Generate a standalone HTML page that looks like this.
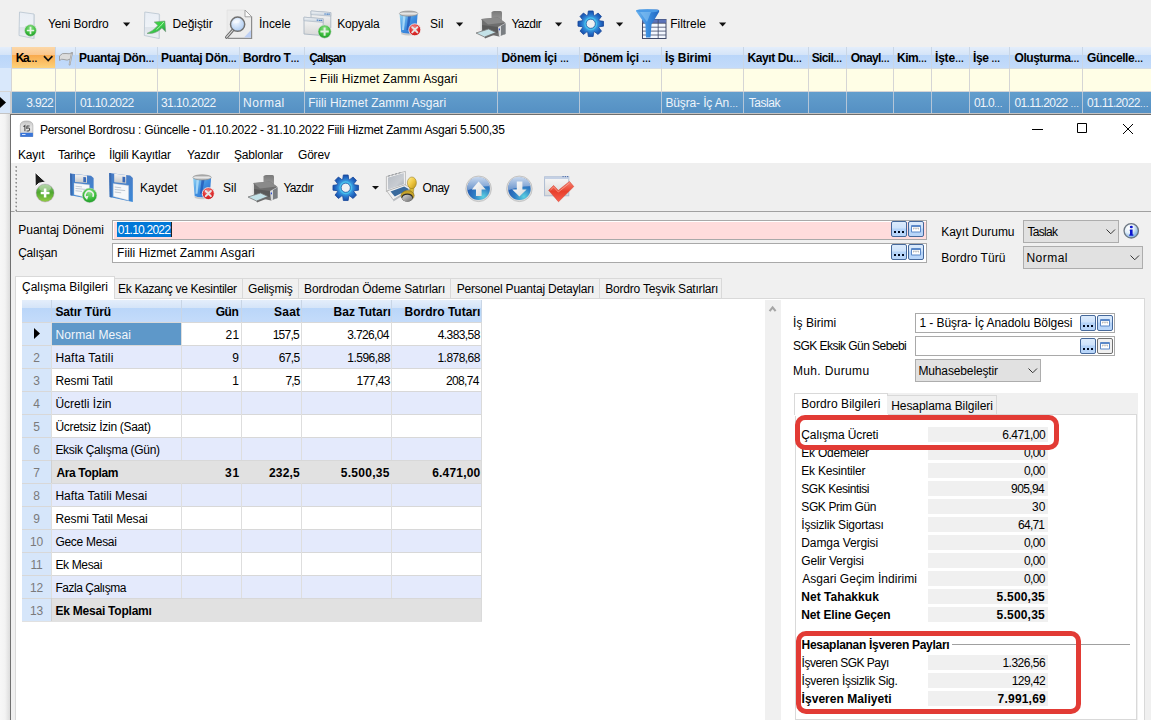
<!DOCTYPE html><html><head><meta charset="utf-8"><style>
*{margin:0;padding:0;box-sizing:border-box}
html,body{width:1151px;height:720px;overflow:hidden;background:#f0f0f0}
body{position:relative;font-family:"Liberation Sans",sans-serif;font-size:12px;color:#000;letter-spacing:-0.2px}
div{position:absolute}
.t{line-height:14px;white-space:nowrap;height:14px}
.el{font-size:9px;letter-spacing:-0.5px}
svg{position:absolute;overflow:visible}
</style></head><body><div style="left:0px;top:0px;width:1151px;height:47px;background:#f0f0f0"></div>
<div class="t" style="left:48.00px;top:17px;;letter-spacing:-0.150px">Yeni Bordro</div>
<div class="t" style="left:172.50px;top:17px;;letter-spacing:-0.071px">Değiştir</div>
<div class="t" style="left:259.00px;top:17px;;letter-spacing:-0.060px">İncele</div>
<div class="t" style="left:337.20px;top:17px;;letter-spacing:-0.150px">Kopyala</div>
<div class="t" style="left:430.00px;top:17px;;letter-spacing:0.100px">Sil</div>
<div class="t" style="left:511.40px;top:17px;;letter-spacing:-0.680px">Yazdır</div>
<div class="t" style="left:670.20px;top:17px;;letter-spacing:-0.029px">Filtrele</div>
<div style="left:0px;top:47px;width:1151px;height:21px;background:linear-gradient(#e4eefb 0px,#d4e4f8 8px,#bad6f9 8px,#c3dbfa 21px)"></div>
<div style="left:12px;top:47px;width:44px;height:21px;background:linear-gradient(#fcd8a8 0px,#fbc68d 8px,#f9a94c 8px,#fdd27a 21px)"></div>
<div style="left:11px;top:47px;width:1px;height:21px;background:#c9d6e6"></div>
<div style="left:55px;top:47px;width:1px;height:21px;background:#c9d6e6"></div>
<div style="left:75px;top:47px;width:1px;height:21px;background:#c9d6e6"></div>
<div style="left:157px;top:47px;width:1px;height:21px;background:#c9d6e6"></div>
<div style="left:239px;top:47px;width:1px;height:21px;background:#c9d6e6"></div>
<div style="left:304px;top:47px;width:1px;height:21px;background:#c9d6e6"></div>
<div style="left:497px;top:47px;width:1px;height:21px;background:#c9d6e6"></div>
<div style="left:579px;top:47px;width:1px;height:21px;background:#c9d6e6"></div>
<div style="left:661px;top:47px;width:1px;height:21px;background:#c9d6e6"></div>
<div style="left:743px;top:47px;width:1px;height:21px;background:#c9d6e6"></div>
<div style="left:808px;top:47px;width:1px;height:21px;background:#c9d6e6"></div>
<div style="left:846px;top:47px;width:1px;height:21px;background:#c9d6e6"></div>
<div style="left:893px;top:47px;width:1px;height:21px;background:#c9d6e6"></div>
<div style="left:931px;top:47px;width:1px;height:21px;background:#c9d6e6"></div>
<div style="left:969px;top:47px;width:1px;height:21px;background:#c9d6e6"></div>
<div style="left:1009px;top:47px;width:1px;height:21px;background:#c9d6e6"></div>
<div style="left:1082px;top:47px;width:1px;height:21px;background:#c9d6e6"></div>
<div style="left:0px;top:68px;width:1151px;height:24px;background:#fffee6"></div>
<div style="left:0px;top:68px;width:1151px;height:1px;background:#d4dce4"></div>
<div style="left:0px;top:68px;width:11px;height:24px;background:#d9e8fb"></div>
<div style="left:11px;top:68px;width:1px;height:24px;background:#d5d5d5"></div>
<div style="left:55px;top:68px;width:1px;height:24px;background:#d5d5d5"></div>
<div style="left:75px;top:68px;width:1px;height:24px;background:#d5d5d5"></div>
<div style="left:157px;top:68px;width:1px;height:24px;background:#d5d5d5"></div>
<div style="left:239px;top:68px;width:1px;height:24px;background:#d5d5d5"></div>
<div style="left:304px;top:68px;width:1px;height:24px;background:#d5d5d5"></div>
<div style="left:497px;top:68px;width:1px;height:24px;background:#d5d5d5"></div>
<div style="left:579px;top:68px;width:1px;height:24px;background:#d5d5d5"></div>
<div style="left:661px;top:68px;width:1px;height:24px;background:#d5d5d5"></div>
<div style="left:743px;top:68px;width:1px;height:24px;background:#d5d5d5"></div>
<div style="left:808px;top:68px;width:1px;height:24px;background:#d5d5d5"></div>
<div style="left:846px;top:68px;width:1px;height:24px;background:#d5d5d5"></div>
<div style="left:893px;top:68px;width:1px;height:24px;background:#d5d5d5"></div>
<div style="left:931px;top:68px;width:1px;height:24px;background:#d5d5d5"></div>
<div style="left:969px;top:68px;width:1px;height:24px;background:#d5d5d5"></div>
<div style="left:1009px;top:68px;width:1px;height:24px;background:#d5d5d5"></div>
<div style="left:1082px;top:68px;width:1px;height:24px;background:#d5d5d5"></div>
<div style="left:0px;top:91px;width:1151px;height:1px;background:#d5d5d5"></div>
<div style="left:0px;top:92px;width:1151px;height:21px;background:linear-gradient(#629ecd,#5590c3)"></div>
<div style="left:0px;top:92px;width:11px;height:21px;background:#d6e6fa"></div>
<div style="left:11px;top:92px;width:1px;height:21px;background:#b4c6d8"></div>
<div style="left:55px;top:92px;width:1px;height:21px;background:#b4c6d8"></div>
<div style="left:75px;top:92px;width:1px;height:21px;background:#b4c6d8"></div>
<div style="left:157px;top:92px;width:1px;height:21px;background:#b4c6d8"></div>
<div style="left:239px;top:92px;width:1px;height:21px;background:#b4c6d8"></div>
<div style="left:304px;top:92px;width:1px;height:21px;background:#b4c6d8"></div>
<div style="left:497px;top:92px;width:1px;height:21px;background:#b4c6d8"></div>
<div style="left:579px;top:92px;width:1px;height:21px;background:#b4c6d8"></div>
<div style="left:661px;top:92px;width:1px;height:21px;background:#b4c6d8"></div>
<div style="left:743px;top:92px;width:1px;height:21px;background:#b4c6d8"></div>
<div style="left:808px;top:92px;width:1px;height:21px;background:#b4c6d8"></div>
<div style="left:846px;top:92px;width:1px;height:21px;background:#b4c6d8"></div>
<div style="left:893px;top:92px;width:1px;height:21px;background:#b4c6d8"></div>
<div style="left:931px;top:92px;width:1px;height:21px;background:#b4c6d8"></div>
<div style="left:969px;top:92px;width:1px;height:21px;background:#b4c6d8"></div>
<div style="left:1009px;top:92px;width:1px;height:21px;background:#b4c6d8"></div>
<div style="left:1082px;top:92px;width:1px;height:21px;background:#b4c6d8"></div>
<div style="left:0px;top:113px;width:1151px;height:1px;background:#c4c4c4"></div>
<div style="left:10px;top:92px;width:2px;height:21px;background:#c8ccd0"></div>
<svg style="left:0px;top:97px" width="8" height="11"><path d="M0 0L6 5.5L0 11Z" fill="#000"/></svg>
<div class="t" style="left:15.70px;top:51px;font-weight:bold;letter-spacing:-1.300px">Ka<span class=el>…</span></div>
<div class="t" style="left:79.00px;top:51px;font-weight:bold;letter-spacing:-0.318px">Puantaj Dön<span class=el>…</span></div>
<div class="t" style="left:161.00px;top:51px;font-weight:bold;letter-spacing:-0.300px">Puantaj Dön<span class=el>…</span></div>
<div class="t" style="left:243.00px;top:51px;font-weight:bold;letter-spacing:-0.388px">Bordro T<span class=el>…</span></div>
<div class="t" style="left:309.20px;top:51px;font-weight:bold;letter-spacing:-0.983px">Çalışan</div>
<div class="t" style="left:501.40px;top:51px;font-weight:bold;letter-spacing:-0.210px">Dönem İçi <span class=el>…</span></div>
<div class="t" style="left:583.40px;top:51px;font-weight:bold;letter-spacing:-0.210px">Dönem İçi <span class=el>…</span></div>
<div class="t" style="left:664.90px;top:51px;font-weight:bold;letter-spacing:-0.125px">İş Birimi</div>
<div class="t" style="left:747.40px;top:51px;font-weight:bold;letter-spacing:-0.388px">Kayıt Du<span class=el>…</span></div>
<div class="t" style="left:811.70px;top:51px;font-weight:bold;letter-spacing:-0.620px">Sicil<span class=el>…</span></div>
<div class="t" style="left:850.70px;top:51px;font-weight:bold;letter-spacing:-0.680px">Onayl<span class=el>…</span></div>
<div class="t" style="left:897.00px;top:51px;font-weight:bold;letter-spacing:-0.533px">Kim<span class=el>…</span></div>
<div class="t" style="left:935.00px;top:51px;font-weight:bold;letter-spacing:-0.200px">İşte<span class=el>…</span></div>
<div class="t" style="left:973.10px;top:51px;font-weight:bold;letter-spacing:-0.475px">İşe <span class=el>…</span></div>
<div class="t" style="left:1014.50px;top:51px;font-weight:bold;letter-spacing:-0.456px">Oluşturma<span class=el>…</span></div>
<div class="t" style="left:1087.10px;top:51px;font-weight:bold;letter-spacing:-0.450px">Güncelle<span class=el>…</span></div>
<svg style="left:43px;top:55px" width="11" height="8"><path d="M1 1.2L5.2 5.6L9.4 1.2" fill="none" stroke="#111" stroke-width="1.7"/></svg>
<svg style="left:57px;top:50px" width="18" height="16"><path d="M2.5,6 Q5,2.5 9,3.5 Q12,4.5 15.5,2.5 L13.5,9 Q10,11 7,9.5 Q4.5,8.5 2.5,10.5 Z" fill="#dcdcdc" stroke="#9a9a9a" stroke-width="0.9"/><path d="M14.8,3.5 L12.6,14.5" stroke="#9a9a9a" stroke-width="1.8" stroke-linecap="round"/><path d="M14.8,3.5 L12.6,14.5" stroke="#e8e8e8" stroke-width="0.6"/></svg>
<div class="t" style="left:309.60px;top:72px;;letter-spacing:0.058px">= Fiili Hizmet Zammı Asgari</div>
<div class="t" style="left:26.20px;top:96px;color:#eef4fa;letter-spacing:-0.625px">3.922</div>
<div class="t" style="left:80.00px;top:96px;color:#eef4fa;letter-spacing:-0.667px">01.10.2022</div>
<div class="t" style="left:161.00px;top:96px;color:#eef4fa;letter-spacing:-0.556px">31.10.2022</div>
<div class="t" style="left:243.00px;top:96px;color:#eef4fa;letter-spacing:0.520px">Normal</div>
<div class="t" style="left:308.20px;top:96px;color:#eef4fa;letter-spacing:0.079px">Fiili Hizmet Zammı Asgari</div>
<div class="t" style="left:665.40px;top:96px;color:#eef4fa;letter-spacing:-0.133px">Büşra- İç An<span class=el>…</span></div>
<div class="t" style="left:748.70px;top:96px;color:#eef4fa;letter-spacing:-0.460px">Taslak</div>
<div class="t" style="left:974.10px;top:96px;color:#eef4fa;letter-spacing:-0.925px">01.0<span class=el>…</span></div>
<div class="t" style="left:1014.50px;top:96px;color:#eef4fa;letter-spacing:-0.618px">01.11.2022 <span class=el>…</span></div>
<div class="t" style="left:1087.10px;top:96px;color:#eef4fa;letter-spacing:-0.660px">01.11.2022<span class=el>…</span></div>
<div style="left:0px;top:114px;width:10px;height:606px;background:linear-gradient(90deg,#f7f7f7 0px,#f3f3f3 5px,#dcdcdc 10px)"></div>
<div style="left:10px;top:114px;width:1141px;height:606px;background:#f0f0f0;border-left:1px solid #707070"></div>
<div style="left:11px;top:114px;width:1140px;height:49px;background:#fff;border-top:1px solid #6e6e6e"></div>
<div class="t" style="left:39.90px;top:123px;;letter-spacing:-0.256px">Personel Bordrosu : Güncelle - 01.10.2022 - 31.10.2022 Fiili Hizmet Zammı Asgari 5.500,35</div>
<svg style="left:1031px;top:122px" width="110" height="14"><path d="M1 7.5H12" stroke="#000" stroke-width="1"/><path d="M46.5 1.5H55.5V10.5H46.5Z" fill="none" stroke="#000" stroke-width="1"/><path d="M92 2L102 12M102 2L92 12" stroke="#000" stroke-width="1"/></svg>
<div class="t" style="left:18px;top:148px;">Kayıt</div>
<div class="t" style="left:58px;top:148px;">Tarihçe</div>
<div class="t" style="left:109px;top:148px;">İlgili Kayıtlar</div>
<div class="t" style="left:187px;top:148px;">Yazdır</div>
<div class="t" style="left:234px;top:148px;">Şablonlar</div>
<div class="t" style="left:298px;top:148px;">Görev</div>
<div style="left:11px;top:163px;width:1140px;height:48px;background:#efefef"></div>
<div style="left:11px;top:211px;width:1140px;height:1px;background:#a0a0a0"></div>
<svg style="left:14px;top:165px" width="6" height="48"><rect x="0.6" y="2.00" width="1.5" height="1.5" fill="#ffffff"/><rect x="1.4" y="1.20" width="1.6" height="1.6" fill="#8c8c8c"/><rect x="0.6" y="5.95" width="1.5" height="1.5" fill="#ffffff"/><rect x="1.4" y="5.15" width="1.6" height="1.6" fill="#8c8c8c"/><rect x="0.6" y="9.90" width="1.5" height="1.5" fill="#ffffff"/><rect x="1.4" y="9.10" width="1.6" height="1.6" fill="#8c8c8c"/><rect x="0.6" y="13.85" width="1.5" height="1.5" fill="#ffffff"/><rect x="1.4" y="13.05" width="1.6" height="1.6" fill="#8c8c8c"/><rect x="0.6" y="17.80" width="1.5" height="1.5" fill="#ffffff"/><rect x="1.4" y="17.00" width="1.6" height="1.6" fill="#8c8c8c"/><rect x="0.6" y="21.75" width="1.5" height="1.5" fill="#ffffff"/><rect x="1.4" y="20.95" width="1.6" height="1.6" fill="#8c8c8c"/><rect x="0.6" y="25.70" width="1.5" height="1.5" fill="#ffffff"/><rect x="1.4" y="24.90" width="1.6" height="1.6" fill="#8c8c8c"/><rect x="0.6" y="29.65" width="1.5" height="1.5" fill="#ffffff"/><rect x="1.4" y="28.85" width="1.6" height="1.6" fill="#8c8c8c"/><rect x="0.6" y="33.60" width="1.5" height="1.5" fill="#ffffff"/><rect x="1.4" y="32.80" width="1.6" height="1.6" fill="#8c8c8c"/><rect x="0.6" y="37.55" width="1.5" height="1.5" fill="#ffffff"/><rect x="1.4" y="36.75" width="1.6" height="1.6" fill="#8c8c8c"/><rect x="0.6" y="41.50" width="1.5" height="1.5" fill="#ffffff"/><rect x="1.4" y="40.70" width="1.6" height="1.6" fill="#8c8c8c"/><rect x="0.6" y="45.45" width="1.5" height="1.5" fill="#ffffff"/><rect x="1.4" y="44.65" width="1.6" height="1.6" fill="#8c8c8c"/></svg>
<div class="t" style="left:140.00px;top:181px;;letter-spacing:0.000px">Kaydet</div>
<div class="t" style="left:223.00px;top:181px;;letter-spacing:0.000px">Sil</div>
<div class="t" style="left:283.40px;top:181px;;letter-spacing:-0.680px">Yazdır</div>
<svg style="left:372px;top:186px" width="8" height="5"><path d="M0 0H7L3.5 3.5Z" fill="#111"/></svg>
<div class="t" style="left:422.60px;top:181px;;letter-spacing:-0.567px">Onay</div>
<div class="t" style="left:18.20px;top:223px;;letter-spacing:0.023px">Puantaj Dönemi</div>
<div style="left:112px;top:220px;width:815px;height:20px;background:#ffdcdc;border:1px solid #a9a9a9;box-shadow:inset 1px 1px 0 #fff"></div>
<div style="left:117px;top:222px;width:54px;height:15px;background:#0078d7"></div>
<div style="left:171px;top:222px;width:1px;height:15px;background:#222"></div>
<div class="t" style="left:117.80px;top:223px;color:#fff;letter-spacing:-0.778px">01.10.2022</div>
<div class="t" style="left:18.20px;top:246px;;letter-spacing:-0.250px">Çalışan</div>
<div style="left:112px;top:243px;width:815px;height:20px;background:#fff;border:1px solid #a9a9a9"></div>
<div class="t" style="left:117.00px;top:246px;;letter-spacing:0.067px">Fiili Hizmet Zammı Asgari</div>
<div style="left:891px;top:221px;width:16px;height:16px;background:linear-gradient(#dcebfc 0px,#cfe3fb 6px,#b4d3f8 7px,#bcd8fa 16px);border:1px solid #45689a;border-radius:2px"></div>
<svg style="left:891px;top:221px" width="16" height="16"><rect x="3" y="10" width="2" height="2" fill="#000a20"/><rect x="7" y="10" width="2" height="2" fill="#000a20"/><rect x="11" y="10" width="2" height="2" fill="#000a20"/></svg>
<div style="left:908px;top:221px;width:16px;height:16px;background:linear-gradient(#dcebfc 0px,#cfe3fb 6px,#b4d3f8 7px,#bcd8fa 16px);border:1px solid #45689a;border-radius:2px"></div>
<svg style="left:908px;top:221px" width="16" height="16"><rect x="3" y="4" width="10" height="7.5" rx="1" fill="#5a88c8"/><rect x="4" y="6" width="8" height="4.5" fill="#fff"/><path d="M5,7.2 H11 M5.5,7.2 V8.5 M8,7.2 V8.5 M10.5,7.2 V8.5" stroke="#a0a0a0" stroke-width="0.6"/></svg>
<div style="left:891px;top:244px;width:16px;height:16px;background:linear-gradient(#dcebfc 0px,#cfe3fb 6px,#b4d3f8 7px,#bcd8fa 16px);border:1px solid #45689a;border-radius:2px"></div>
<svg style="left:891px;top:244px" width="16" height="16"><rect x="3" y="10" width="2" height="2" fill="#000a20"/><rect x="7" y="10" width="2" height="2" fill="#000a20"/><rect x="11" y="10" width="2" height="2" fill="#000a20"/></svg>
<div style="left:908px;top:244px;width:16px;height:16px;background:linear-gradient(#dcebfc 0px,#cfe3fb 6px,#b4d3f8 7px,#bcd8fa 16px);border:1px solid #45689a;border-radius:2px"></div>
<svg style="left:908px;top:244px" width="16" height="16"><rect x="3" y="4" width="10" height="7.5" rx="1" fill="#5a88c8"/><rect x="4" y="6" width="8" height="4.5" fill="#fff"/><path d="M5,7.2 H11 M5.5,7.2 V8.5 M8,7.2 V8.5 M10.5,7.2 V8.5" stroke="#a0a0a0" stroke-width="0.6"/></svg>
<div class="t" style="left:941.20px;top:225px;;letter-spacing:0.000px">Kayıt Durumu</div>
<div style="left:1023px;top:220px;width:96px;height:23px;background:#e1e1e1;border:1px solid #adadad"></div>
<div class="t" style="left:1027.40px;top:225px;;letter-spacing:-0.680px">Taslak</div>
<svg style="left:1105.5px;top:229.0px" width="10" height="6"><path d="M0.5 0.5L4.75 4.75L9 0.5" fill="none" stroke="#333" stroke-width="1"/></svg>
<svg style="left:1123px;top:222px" width="18" height="18"><defs><radialGradient id="ig" cx="35%" cy="30%" r="75%"><stop offset="0" stop-color="#ffffff"/><stop offset="0.45" stop-color="#e4f0fa"/><stop offset="1" stop-color="#6aa4dc"/></radialGradient></defs><circle cx="8.25" cy="8.8" r="7.2" fill="url(#ig)" stroke="#6c7682" stroke-width="1.3"/><path d="M7,7.4 H9.6 V12.6 H10.4 V13.8 H6.2 V12.6 H7 V8.6 H6.4 Z" fill="#0a14d0"/><ellipse cx="8.3" cy="5" rx="1.5" ry="1.2" fill="#0a14d0"/></svg>
<div class="t" style="left:941.20px;top:251px;;letter-spacing:0.040px">Bordro Türü</div>
<div style="left:1023px;top:246px;width:120px;height:23px;background:#e1e1e1;border:1px solid #adadad"></div>
<div class="t" style="left:1026.40px;top:251px;;letter-spacing:0.480px">Normal</div>
<svg style="left:1129.5px;top:255.0px" width="10" height="6"><path d="M0.5 0.5L4.75 4.75L9 0.5" fill="none" stroke="#333" stroke-width="1"/></svg>
<div style="left:15px;top:276px;width:100px;height:24px;background:#fff;border:1px solid #d9d9d9;border-bottom:none"></div>
<div class="t" style="left:22.00px;top:280px;;letter-spacing:0.000px">Çalışma Bilgileri</div>
<div style="left:115px;top:278px;width:128px;height:21px;background:#f0f0f0;border:1px solid #d9d9d9;border-left:none"></div>
<div class="t" style="left:118.00px;top:282px;;letter-spacing:-0.318px">Ek Kazanç ve Kesintiler</div>
<div style="left:243px;top:278px;width:56px;height:21px;background:#f0f0f0;border:1px solid #d9d9d9;border-left:none"></div>
<div class="t" style="left:248.00px;top:282px;;letter-spacing:-0.186px">Gelişmiş</div>
<div style="left:299px;top:278px;width:152px;height:21px;background:#f0f0f0;border:1px solid #d9d9d9;border-left:none"></div>
<div class="t" style="left:304.00px;top:282px;;letter-spacing:-0.117px">Bordrodan Ödeme Satırları</div>
<div style="left:451px;top:278px;width:149px;height:21px;background:#f0f0f0;border:1px solid #d9d9d9;border-left:none"></div>
<div class="t" style="left:456.70px;top:282px;;letter-spacing:-0.200px">Personel Puantaj Detayları</div>
<div style="left:600px;top:278px;width:122px;height:21px;background:#f0f0f0;border:1px solid #d9d9d9;border-left:none"></div>
<div class="t" style="left:605.30px;top:282px;;letter-spacing:-0.214px">Bordro Teşvik Satırları</div>
<div style="left:15px;top:298px;width:1130px;height:422px;background:#fff;border:1px solid #d9d9d9;border-bottom:none"></div>
<div style="left:16px;top:298px;width:98px;height:2px;background:#fff"></div>
<div style="left:22px;top:300px;width:460px;height:22px;background:linear-gradient(#e4eefb 0px,#d4e4f8 8px,#bad6f9 8px,#c3dbfa 21px)"></div>
<div style="left:51px;top:300px;width:1px;height:22px;background:#c9d6e6"></div>
<div style="left:181px;top:300px;width:1px;height:22px;background:#c9d6e6"></div>
<div style="left:241px;top:300px;width:1px;height:22px;background:#c9d6e6"></div>
<div style="left:301px;top:300px;width:1px;height:22px;background:#c9d6e6"></div>
<div style="left:391px;top:300px;width:1px;height:22px;background:#c9d6e6"></div>
<div style="left:22px;top:322px;width:460px;height:23px;background:#ffffff"></div>
<div style="left:22px;top:322px;width:30px;height:23px;background:#d6e6fa"></div>
<div style="left:22px;top:322px;width:460px;height:1px;background:#d8d8d8"></div>
<div style="left:51px;top:322px;width:1px;height:23px;background:#dedede"></div>
<div style="left:181px;top:322px;width:1px;height:23px;background:#dedede"></div>
<div style="left:241px;top:322px;width:1px;height:23px;background:#dedede"></div>
<div style="left:301px;top:322px;width:1px;height:23px;background:#dedede"></div>
<div style="left:391px;top:322px;width:1px;height:23px;background:#dedede"></div>
<div style="left:52px;top:323px;width:129px;height:22px;background:#5e98c9"></div>
<div class="t" style="left:55.40px;top:328px;color:#f2f6fb;letter-spacing:0.145px">Normal Mesai</div>
<svg style="left:34px;top:328px" width="7" height="11"><path d="M0 0L6 5.5L0 11Z" fill="#000"/></svg>
<div class="t" style="left:225.40px;top:328px;;letter-spacing:0.400px">21</div>
<div class="t" style="left:272.70px;top:328px;;letter-spacing:-0.750px">157,5</div>
<div class="t" style="left:347.30px;top:328px;;letter-spacing:-0.657px">3.726,04</div>
<div class="t" style="left:437.80px;top:328px;;letter-spacing:-0.600px">4.383,58</div>
<div style="left:22px;top:345px;width:460px;height:23px;background:#e4eafc"></div>
<div style="left:22px;top:345px;width:30px;height:23px;background:#d6e6fa"></div>
<div style="left:22px;top:345px;width:460px;height:1px;background:#d8d8d8"></div>
<div style="left:51px;top:345px;width:1px;height:23px;background:#dedede"></div>
<div style="left:181px;top:345px;width:1px;height:23px;background:#dedede"></div>
<div style="left:241px;top:345px;width:1px;height:23px;background:#dedede"></div>
<div style="left:301px;top:345px;width:1px;height:23px;background:#dedede"></div>
<div style="left:391px;top:345px;width:1px;height:23px;background:#dedede"></div>
<div class="t" style="left:22px;top:351px;width:29px;text-align:center;color:#7a7a7a">2</div>
<div class="t" style="left:55.40px;top:351px;;letter-spacing:0.191px">Hafta Tatili</div>
<div class="t" style="left:38.80000000000001px;top:351px;width:200px;text-align:right;">9</div>
<div class="t" style="left:278.80px;top:351px;;letter-spacing:-0.700px">67,5</div>
<div class="t" style="left:347.30px;top:351px;;letter-spacing:-0.514px">1.596,88</div>
<div class="t" style="left:437.50px;top:351px;;letter-spacing:-0.557px">1.878,68</div>
<div style="left:22px;top:368px;width:460px;height:23px;background:#ffffff"></div>
<div style="left:22px;top:368px;width:30px;height:23px;background:#d6e6fa"></div>
<div style="left:22px;top:368px;width:460px;height:1px;background:#d8d8d8"></div>
<div style="left:51px;top:368px;width:1px;height:23px;background:#dedede"></div>
<div style="left:181px;top:368px;width:1px;height:23px;background:#dedede"></div>
<div style="left:241px;top:368px;width:1px;height:23px;background:#dedede"></div>
<div style="left:301px;top:368px;width:1px;height:23px;background:#dedede"></div>
<div style="left:391px;top:368px;width:1px;height:23px;background:#dedede"></div>
<div class="t" style="left:22px;top:374px;width:29px;text-align:center;color:#7a7a7a">3</div>
<div class="t" style="left:55.40px;top:374px;;letter-spacing:-0.090px">Resmi Tatil</div>
<div class="t" style="left:38.80000000000001px;top:374px;width:200px;text-align:right;">1</div>
<div class="t" style="left:285.40px;top:374px;;letter-spacing:-0.850px">7,5</div>
<div class="t" style="left:356.60px;top:374px;;letter-spacing:-0.580px">177,43</div>
<div class="t" style="left:446.00px;top:374px;;letter-spacing:-0.680px">208,74</div>
<div style="left:22px;top:391px;width:460px;height:23px;background:#e4eafc"></div>
<div style="left:22px;top:391px;width:30px;height:23px;background:#d6e6fa"></div>
<div style="left:22px;top:391px;width:460px;height:1px;background:#d8d8d8"></div>
<div style="left:51px;top:391px;width:1px;height:23px;background:#dedede"></div>
<div style="left:181px;top:391px;width:1px;height:23px;background:#dedede"></div>
<div style="left:241px;top:391px;width:1px;height:23px;background:#dedede"></div>
<div style="left:301px;top:391px;width:1px;height:23px;background:#dedede"></div>
<div style="left:391px;top:391px;width:1px;height:23px;background:#dedede"></div>
<div class="t" style="left:22px;top:397px;width:29px;text-align:center;color:#7a7a7a">4</div>
<div class="t" style="left:55.40px;top:397px;;letter-spacing:0.009px">Ücretli İzin</div>
<div style="left:22px;top:414px;width:460px;height:23px;background:#ffffff"></div>
<div style="left:22px;top:414px;width:30px;height:23px;background:#d6e6fa"></div>
<div style="left:22px;top:414px;width:460px;height:1px;background:#d8d8d8"></div>
<div style="left:51px;top:414px;width:1px;height:23px;background:#dedede"></div>
<div style="left:181px;top:414px;width:1px;height:23px;background:#dedede"></div>
<div style="left:241px;top:414px;width:1px;height:23px;background:#dedede"></div>
<div style="left:301px;top:414px;width:1px;height:23px;background:#dedede"></div>
<div style="left:391px;top:414px;width:1px;height:23px;background:#dedede"></div>
<div class="t" style="left:22px;top:420px;width:29px;text-align:center;color:#7a7a7a">5</div>
<div class="t" style="left:55.40px;top:420px;;letter-spacing:-0.305px">Ücretsiz İzin (Saat)</div>
<div style="left:22px;top:437px;width:460px;height:23px;background:#e4eafc"></div>
<div style="left:22px;top:437px;width:30px;height:23px;background:#d6e6fa"></div>
<div style="left:22px;top:437px;width:460px;height:1px;background:#d8d8d8"></div>
<div style="left:51px;top:437px;width:1px;height:23px;background:#dedede"></div>
<div style="left:181px;top:437px;width:1px;height:23px;background:#dedede"></div>
<div style="left:241px;top:437px;width:1px;height:23px;background:#dedede"></div>
<div style="left:301px;top:437px;width:1px;height:23px;background:#dedede"></div>
<div style="left:391px;top:437px;width:1px;height:23px;background:#dedede"></div>
<div class="t" style="left:22px;top:443px;width:29px;text-align:center;color:#7a7a7a">6</div>
<div class="t" style="left:55.40px;top:443px;;letter-spacing:-0.294px">Eksik Çalışma (Gün)</div>
<div style="left:22px;top:460px;width:460px;height:23px;background:#e1e1e1"></div>
<div style="left:22px;top:460px;width:30px;height:23px;background:#d6e6fa"></div>
<div style="left:22px;top:460px;width:460px;height:1px;background:#d8d8d8"></div>
<div style="left:51px;top:460px;width:1px;height:23px;background:#d0d0d0"></div>
<div class="t" style="left:22px;top:466px;width:29px;text-align:center;color:#7a7a7a">7</div>
<div class="t" style="left:56.40px;top:466px;font-weight:bold;letter-spacing:-0.344px">Ara Toplam</div>
<div class="t" style="left:225.00px;top:466px;font-weight:bold;letter-spacing:0.800px">31</div>
<div class="t" style="left:268.90px;top:466px;font-weight:bold;letter-spacing:0.200px">232,5</div>
<div class="t" style="left:340.80px;top:466px;font-weight:bold;letter-spacing:0.271px">5.500,35</div>
<div class="t" style="left:432.20px;top:466px;font-weight:bold;letter-spacing:0.200px">6.471,00</div>
<div style="left:22px;top:483px;width:460px;height:23px;background:#e4eafc"></div>
<div style="left:22px;top:483px;width:30px;height:23px;background:#d6e6fa"></div>
<div style="left:22px;top:483px;width:460px;height:1px;background:#d8d8d8"></div>
<div style="left:51px;top:483px;width:1px;height:23px;background:#dedede"></div>
<div style="left:181px;top:483px;width:1px;height:23px;background:#dedede"></div>
<div style="left:241px;top:483px;width:1px;height:23px;background:#dedede"></div>
<div style="left:301px;top:483px;width:1px;height:23px;background:#dedede"></div>
<div style="left:391px;top:483px;width:1px;height:23px;background:#dedede"></div>
<div class="t" style="left:22px;top:489px;width:29px;text-align:center;color:#7a7a7a">8</div>
<div class="t" style="left:55.40px;top:489px;;letter-spacing:0.035px">Hafta Tatili Mesai</div>
<div style="left:22px;top:506px;width:460px;height:23px;background:#ffffff"></div>
<div style="left:22px;top:506px;width:30px;height:23px;background:#d6e6fa"></div>
<div style="left:22px;top:506px;width:460px;height:1px;background:#d8d8d8"></div>
<div style="left:51px;top:506px;width:1px;height:23px;background:#dedede"></div>
<div style="left:181px;top:506px;width:1px;height:23px;background:#dedede"></div>
<div style="left:241px;top:506px;width:1px;height:23px;background:#dedede"></div>
<div style="left:301px;top:506px;width:1px;height:23px;background:#dedede"></div>
<div style="left:391px;top:506px;width:1px;height:23px;background:#dedede"></div>
<div class="t" style="left:22px;top:512px;width:29px;text-align:center;color:#7a7a7a">9</div>
<div class="t" style="left:55.40px;top:512px;;letter-spacing:-0.088px">Resmi Tatil Mesai</div>
<div style="left:22px;top:529px;width:460px;height:23px;background:#e4eafc"></div>
<div style="left:22px;top:529px;width:30px;height:23px;background:#d6e6fa"></div>
<div style="left:22px;top:529px;width:460px;height:1px;background:#d8d8d8"></div>
<div style="left:51px;top:529px;width:1px;height:23px;background:#dedede"></div>
<div style="left:181px;top:529px;width:1px;height:23px;background:#dedede"></div>
<div style="left:241px;top:529px;width:1px;height:23px;background:#dedede"></div>
<div style="left:301px;top:529px;width:1px;height:23px;background:#dedede"></div>
<div style="left:391px;top:529px;width:1px;height:23px;background:#dedede"></div>
<div class="t" style="left:22px;top:535px;width:29px;text-align:center;color:#7a7a7a">10</div>
<div class="t" style="left:55.40px;top:535px;;letter-spacing:-0.278px">Gece Mesai</div>
<div style="left:22px;top:552px;width:460px;height:23px;background:#ffffff"></div>
<div style="left:22px;top:552px;width:30px;height:23px;background:#d6e6fa"></div>
<div style="left:22px;top:552px;width:460px;height:1px;background:#d8d8d8"></div>
<div style="left:51px;top:552px;width:1px;height:23px;background:#dedede"></div>
<div style="left:181px;top:552px;width:1px;height:23px;background:#dedede"></div>
<div style="left:241px;top:552px;width:1px;height:23px;background:#dedede"></div>
<div style="left:301px;top:552px;width:1px;height:23px;background:#dedede"></div>
<div style="left:391px;top:552px;width:1px;height:23px;background:#dedede"></div>
<div class="t" style="left:22px;top:558px;width:29px;text-align:center;color:#7a7a7a">11</div>
<div class="t" style="left:55.40px;top:558px;;letter-spacing:-0.343px">Ek Mesai</div>
<div style="left:22px;top:575px;width:460px;height:23px;background:#e4eafc"></div>
<div style="left:22px;top:575px;width:30px;height:23px;background:#d6e6fa"></div>
<div style="left:22px;top:575px;width:460px;height:1px;background:#d8d8d8"></div>
<div style="left:51px;top:575px;width:1px;height:23px;background:#dedede"></div>
<div style="left:181px;top:575px;width:1px;height:23px;background:#dedede"></div>
<div style="left:241px;top:575px;width:1px;height:23px;background:#dedede"></div>
<div style="left:301px;top:575px;width:1px;height:23px;background:#dedede"></div>
<div style="left:391px;top:575px;width:1px;height:23px;background:#dedede"></div>
<div class="t" style="left:22px;top:581px;width:29px;text-align:center;color:#7a7a7a">12</div>
<div class="t" style="left:55.40px;top:581px;;letter-spacing:-0.467px">Fazla Çalışma</div>
<div style="left:22px;top:598px;width:460px;height:23px;background:#e1e1e1"></div>
<div style="left:22px;top:598px;width:30px;height:23px;background:#d6e6fa"></div>
<div style="left:22px;top:598px;width:460px;height:1px;background:#d8d8d8"></div>
<div style="left:51px;top:598px;width:1px;height:23px;background:#d0d0d0"></div>
<div class="t" style="left:22px;top:604px;width:29px;text-align:center;color:#7a7a7a">13</div>
<div class="t" style="left:55.40px;top:604px;font-weight:bold;letter-spacing:-0.220px">Ek Mesai Toplamı</div>
<div style="left:22px;top:621px;width:460px;height:1px;background:#e1e1e1"></div>
<div style="left:481px;top:300px;width:1px;height:22px;background:#c9d6e6"></div>
<div style="left:481px;top:322px;width:1px;height:299px;background:#dadada"></div>
<div class="t" style="left:55.40px;top:305px;font-weight:bold;letter-spacing:-0.100px">Satır Türü</div>
<div class="t" style="left:215.70px;top:305px;font-weight:bold;letter-spacing:-0.450px">Gün</div>
<div class="t" style="left:274.00px;top:305px;font-weight:bold;letter-spacing:0.233px">Saat</div>
<div class="t" style="left:333.50px;top:305px;font-weight:bold;letter-spacing:0.022px">Baz Tutarı</div>
<div class="t" style="left:404.50px;top:305px;font-weight:bold;letter-spacing:0.008px">Bordro Tutarı</div>
<div style="left:765px;top:300px;width:16px;height:420px;background:#f0f0f0"></div>
<svg style="left:768px;top:305px" width="10" height="8"><path d="M1.6 6.2L4.6 2.4L7.6 6.2" fill="none" stroke="#a6a6a6" stroke-width="2.1"/></svg>
<div class="t" style="left:793.00px;top:316px;;letter-spacing:0.075px">İş Birimi</div>
<div style="left:915px;top:313px;width:200px;height:20px;background:#fff;border:1px solid #a9a9a9"></div>
<div class="t" style="left:919.40px;top:316px;;letter-spacing:-0.064px">1 - Büşra- İç Anadolu Bölgesi</div>
<div style="left:1080px;top:315px;width:16px;height:16px;background:linear-gradient(#dcebfc 0px,#cfe3fb 6px,#b4d3f8 7px,#bcd8fa 16px);border:1px solid #45689a;border-radius:2px"></div>
<svg style="left:1080px;top:315px" width="16" height="16"><rect x="3" y="10" width="2" height="2" fill="#000a20"/><rect x="7" y="10" width="2" height="2" fill="#000a20"/><rect x="11" y="10" width="2" height="2" fill="#000a20"/></svg>
<div style="left:1097px;top:315px;width:16px;height:16px;background:linear-gradient(#dcebfc 0px,#cfe3fb 6px,#b4d3f8 7px,#bcd8fa 16px);border:1px solid #45689a;border-radius:2px"></div>
<svg style="left:1097px;top:315px" width="16" height="16"><rect x="3" y="4" width="10" height="7.5" rx="1" fill="#5a88c8"/><rect x="4" y="6" width="8" height="4.5" fill="#fff"/><path d="M5,7.2 H11 M5.5,7.2 V8.5 M8,7.2 V8.5 M10.5,7.2 V8.5" stroke="#a0a0a0" stroke-width="0.6"/></svg>
<div class="t" style="left:793.00px;top:339px;;letter-spacing:-0.542px">SGK Eksik Gün Sebebi</div>
<div style="left:915px;top:336px;width:200px;height:20px;background:#fff;border:1px solid #a9a9a9"></div>
<div style="left:1080px;top:338px;width:16px;height:16px;background:linear-gradient(#dcebfc 0px,#cfe3fb 6px,#b4d3f8 7px,#bcd8fa 16px);border:1px solid #45689a;border-radius:2px"></div>
<svg style="left:1080px;top:338px" width="16" height="16"><rect x="3" y="10" width="2" height="2" fill="#000a20"/><rect x="7" y="10" width="2" height="2" fill="#000a20"/><rect x="11" y="10" width="2" height="2" fill="#000a20"/></svg>
<div style="left:1097px;top:338px;width:16px;height:16px;background:#f0f0f0;border:1px solid #707070;border-radius:2px"></div>
<svg style="left:1097px;top:338px" width="16" height="16"><rect x="3" y="4" width="10" height="7.5" rx="1" fill="#5a88c8"/><rect x="4" y="6" width="8" height="4.5" fill="#fff"/><path d="M5,7.2 H11 M5.5,7.2 V8.5 M8,7.2 V8.5 M10.5,7.2 V8.5" stroke="#a0a0a0" stroke-width="0.6"/></svg>
<div class="t" style="left:793.00px;top:364px;;letter-spacing:0.340px">Muh. Durumu</div>
<div style="left:915px;top:359px;width:126px;height:23px;background:#e1e1e1;border:1px solid #adadad"></div>
<div class="t" style="left:918.40px;top:364px;;letter-spacing:-0.131px">Muhasebeleştir</div>
<svg style="left:1027.5px;top:368.0px" width="10" height="6"><path d="M0.5 0.5L4.75 4.75L9 0.5" fill="none" stroke="#333" stroke-width="1"/></svg>
<div style="left:795px;top:393px;width:343px;height:327px;background:#f0f0f0"></div>
<div style="left:794px;top:393px;width:94px;height:22px;background:#fff;border:1px solid #d9d9d9;border-bottom:none"></div>
<div class="t" style="left:801.20px;top:397px;;letter-spacing:0.073px">Bordro Bilgileri</div>
<div style="left:887px;top:395px;width:110px;height:20px;background:#f0f0f0;border:1px solid #d9d9d9;border-left:none"></div>
<div class="t" style="left:891.20px;top:399px;;letter-spacing:-0.056px">Hesaplama Bilgileri</div>
<div style="left:795px;top:414px;width:342px;height:306px;background:#fff;border:1px solid #d9d9d9"></div>
<div style="left:795px;top:414px;width:93px;height:2px;background:#fff"></div>
<div style="left:928px;top:427px;width:120px;height:15px;background:#f0f0f0"></div>
<div class="t" style="left:801.30px;top:428px;;letter-spacing:-0.115px">Çalışma Ücreti</div>
<div class="t" style="left:1002.30px;top:428px;;letter-spacing:-0.471px">6.471,00</div>
<div style="left:928px;top:445px;width:120px;height:15px;background:#f0f0f0"></div>
<div class="t" style="left:801.30px;top:446px;;letter-spacing:-0.230px">Ek Ödemeler</div>
<div class="t" style="left:1024.00px;top:446px;;letter-spacing:-0.667px">0,00</div>
<div style="left:928px;top:463px;width:120px;height:15px;background:#f0f0f0"></div>
<div class="t" style="left:801.30px;top:464px;;letter-spacing:-0.208px">Ek Kesintiler</div>
<div class="t" style="left:1024.00px;top:464px;;letter-spacing:-0.667px">0,00</div>
<div style="left:928px;top:481px;width:120px;height:15px;background:#f0f0f0"></div>
<div class="t" style="left:801.30px;top:482px;;letter-spacing:-0.442px">SGK Kesintisi</div>
<div class="t" style="left:1011.10px;top:482px;;letter-spacing:-0.620px">905,94</div>
<div style="left:928px;top:499px;width:120px;height:15px;background:#f0f0f0"></div>
<div class="t" style="left:801.30px;top:500px;;letter-spacing:-0.382px">SGK Prim Gün</div>
<div class="t" style="left:1031.90px;top:500px;;letter-spacing:0.100px">30</div>
<div style="left:928px;top:517px;width:120px;height:15px;background:#f0f0f0"></div>
<div class="t" style="left:801.30px;top:518px;;letter-spacing:-0.206px">İşsizlik Sigortası</div>
<div class="t" style="left:1018.10px;top:518px;;letter-spacing:-0.775px">64,71</div>
<div style="left:928px;top:535px;width:120px;height:15px;background:#f0f0f0"></div>
<div class="t" style="left:801.30px;top:536px;;letter-spacing:-0.100px">Damga Vergisi</div>
<div class="t" style="left:1024.00px;top:536px;;letter-spacing:-0.667px">0,00</div>
<div style="left:928px;top:553px;width:120px;height:15px;background:#f0f0f0"></div>
<div class="t" style="left:801.30px;top:554px;;letter-spacing:-0.175px">Gelir Vergisi</div>
<div class="t" style="left:1024.00px;top:554px;;letter-spacing:-0.667px">0,00</div>
<div style="left:928px;top:571px;width:120px;height:15px;background:#f0f0f0"></div>
<div class="t" style="left:802.30px;top:572px;;letter-spacing:0.025px">Asgari Geçim İndirimi</div>
<div class="t" style="left:1024.00px;top:572px;;letter-spacing:-0.667px">0,00</div>
<div style="left:928px;top:589px;width:120px;height:15px;background:#f0f0f0"></div>
<div class="t" style="left:801.30px;top:590px;font-weight:bold;letter-spacing:0.036px">Net Tahakkuk</div>
<div class="t" style="left:996.60px;top:590px;font-weight:bold;letter-spacing:0.200px">5.500,35</div>
<div style="left:928px;top:607px;width:120px;height:15px;background:#f0f0f0"></div>
<div class="t" style="left:801.30px;top:608px;font-weight:bold;letter-spacing:-0.143px">Net Eline Geçen</div>
<div class="t" style="left:996.60px;top:608px;font-weight:bold;letter-spacing:0.200px">5.500,35</div>
<div class="t" style="left:801.60px;top:638px;font-weight:bold;letter-spacing:-0.296px">Hesaplanan İşveren Payları</div>
<div style="left:952px;top:644px;width:178px;height:1px;background:#a0a0a0"></div>
<div style="left:928px;top:655px;width:120px;height:15px;background:#f0f0f0"></div>
<div class="t" style="left:801.60px;top:656px;;letter-spacing:-0.507px">İşveren SGK Payı</div>
<div class="t" style="left:1002.40px;top:656px;;letter-spacing:-0.486px">1.326,56</div>
<div style="left:928px;top:673px;width:120px;height:15px;background:#f0f0f0"></div>
<div class="t" style="left:801.60px;top:674px;;letter-spacing:-0.295px">İşveren İşsizlik Sig.</div>
<div class="t" style="left:1011.70px;top:674px;;letter-spacing:-0.540px">129,42</div>
<div style="left:928px;top:691px;width:120px;height:15px;background:#f0f0f0"></div>
<div class="t" style="left:801.60px;top:692px;font-weight:bold;letter-spacing:0.040px">İşveren Maliyeti</div>
<div class="t" style="left:997.60px;top:692px;font-weight:bold;letter-spacing:0.200px">7.991,69</div>
<div style="left:795px;top:415px;width:264px;height:35px;border:5px solid #e23b35;border-radius:10px"></div>
<div style="left:796px;top:631px;width:285px;height:83px;border:5px solid #e23b35;border-radius:10px"></div>
<svg style="position:absolute;left:0;top:0" width="1151" height="720" viewBox="0 0 1151 720">
<defs>
<linearGradient id="gPage" x1="0" y1="0" x2="0" y2="1"><stop offset="0" stop-color="#e9eef5"/><stop offset="0.55" stop-color="#eef2f7"/><stop offset="0.56" stop-color="#dde3ea"/><stop offset="1" stop-color="#eef1f5"/></linearGradient>
<radialGradient id="gGreen" cx="0.5" cy="0.3" r="0.7"><stop offset="0" stop-color="#8fe08a"/><stop offset="0.6" stop-color="#3fbf3f"/><stop offset="1" stop-color="#1f9a2a"/></radialGradient>
<linearGradient id="gGreen2" x1="0" y1="0" x2="0" y2="1"><stop offset="0" stop-color="#9ccf8e"/><stop offset="0.45" stop-color="#4da72f"/><stop offset="1" stop-color="#94cc48"/></linearGradient>
<linearGradient id="gArrow" x1="0" y1="0" x2="1" y2="1"><stop offset="0" stop-color="#40e040"/><stop offset="0.6" stop-color="#38c848"/><stop offset="1" stop-color="#2a8a48"/></linearGradient>
<radialGradient id="gLens" cx="0.4" cy="0.35" r="0.7"><stop offset="0" stop-color="#f4f9ff"/><stop offset="1" stop-color="#a9c8ef"/></radialGradient>
<linearGradient id="gTrash" x1="0" y1="0" x2="1" y2="1"><stop offset="0" stop-color="#8fd3f5"/><stop offset="0.5" stop-color="#3f8fe0"/><stop offset="1" stop-color="#2a64c8"/></linearGradient>
<linearGradient id="gRim" x1="0" y1="0" x2="0" y2="1"><stop offset="0" stop-color="#9a9a9a"/><stop offset="0.5" stop-color="#e8e8e8"/><stop offset="1" stop-color="#b0b0b0"/></linearGradient>
<radialGradient id="gRed" cx="0.45" cy="0.3" r="0.75"><stop offset="0" stop-color="#f08a8a"/><stop offset="0.55" stop-color="#e23030"/><stop offset="1" stop-color="#c01818"/></radialGradient>
<radialGradient id="gGear" cx="0.5" cy="0.5" r="0.5"><stop offset="0" stop-color="#6ad0f4"/><stop offset="0.5" stop-color="#3a9ce0"/><stop offset="0.75" stop-color="#2470c8"/><stop offset="1" stop-color="#1a4ea8"/></radialGradient>
<linearGradient id="gFunnel" x1="0" y1="0" x2="1" y2="0"><stop offset="0" stop-color="#6fb4ee"/><stop offset="0.5" stop-color="#3a8ee0"/><stop offset="1" stop-color="#2266c0"/></linearGradient>
<linearGradient id="gFloppy" x1="0" y1="0" x2="0" y2="1"><stop offset="0" stop-color="#4a7cc4"/><stop offset="1" stop-color="#3a88d8"/></linearGradient>
<linearGradient id="gShutter" x1="0" y1="0" x2="0" y2="1"><stop offset="0" stop-color="#f4f4f4"/><stop offset="1" stop-color="#c8c8c8"/></linearGradient>
<radialGradient id="gBlueBall" cx="0.5" cy="0.75" r="0.8"><stop offset="0" stop-color="#4cc0e0"/><stop offset="0.5" stop-color="#2f7fc8"/><stop offset="1" stop-color="#2a5aaa"/></radialGradient>
<linearGradient id="gCheck" x1="0" y1="0" x2="0" y2="1"><stop offset="0" stop-color="#f88070"/><stop offset="0.5" stop-color="#e8402c"/><stop offset="1" stop-color="#f86050"/></linearGradient>
<linearGradient id="gWin" x1="0" y1="0" x2="0" y2="1"><stop offset="0" stop-color="#f8f8f8"/><stop offset="1" stop-color="#d8d8d8"/></linearGradient>
<linearGradient id="gPrn" x1="0" y1="0" x2="0" y2="1"><stop offset="0" stop-color="#7a7a7a"/><stop offset="1" stop-color="#9a9a9a"/></linearGradient>
<linearGradient id="gYel" x1="0" y1="0" x2="1" y2="1"><stop offset="0" stop-color="#fff0a0"/><stop offset="0.5" stop-color="#f0c840"/><stop offset="1" stop-color="#b89018"/></linearGradient>
<linearGradient id="gLid" x1="0" y1="0" x2="1" y2="1"><stop offset="0" stop-color="#b4bac2"/><stop offset="0.6" stop-color="#c8ccd2"/><stop offset="1" stop-color="#9aa2aa"/></linearGradient>

<radialGradient id="gBall2" cx="0.7" cy="0.85" r="0.9"><stop offset="0" stop-color="#5cd0e0"/><stop offset="0.45" stop-color="#2f7cc4"/><stop offset="1" stop-color="#1f4ea8"/></radialGradient>
<linearGradient id="gBallTop" x1="0" y1="0" x2="0" y2="1"><stop offset="0" stop-color="#c8d8ee"/><stop offset="1" stop-color="#6a94cc"/></linearGradient>
<linearGradient id="gArrW" x1="0" y1="0" x2="1" y2="1"><stop offset="0" stop-color="#ffffff"/><stop offset="1" stop-color="#d8d8d8"/></linearGradient>
<linearGradient id="gStampB" x1="0" y1="0" x2="1" y2="1"><stop offset="0" stop-color="#d8d8d8"/><stop offset="1" stop-color="#6a6a6a"/></linearGradient>
<linearGradient id="gTitleBar" x1="0" y1="0" x2="0" y2="1"><stop offset="0" stop-color="#f4f6f8"/><stop offset="1" stop-color="#c0ccd8"/></linearGradient>
<linearGradient id="gCal" x1="0" y1="0" x2="0" y2="1"><stop offset="0" stop-color="#c4c4c4"/><stop offset="0.4" stop-color="#e4e4e4"/><stop offset="1" stop-color="#d4d4d4"/></linearGradient>
<g id="trash">
  <path d="M7.6,8.2 L25.6,8.2 L24.2,26.5 Q16.6,29 9.2,26.5 Z" fill="url(#gTrash)"/>
  <path d="M11,10 L13.5,10 L12,24 L10,24Z" fill="#b8e2fa" opacity="0.8"/>
  <path d="M16,10 L19,10 L16.5,24 L14.5,24Z" fill="#1e4fb0" opacity="0.7"/>
  <path d="M9.2,26.5 Q16.6,29 24.2,26.5 L24,28.2 Q16.6,30.8 9.3,28.2Z" fill="#c8c8c8"/>
  <ellipse cx="16.6" cy="7.6" rx="9.2" ry="2.6" fill="url(#gRim)" stroke="#8a8a8a" stroke-width="0.6"/>
  <circle cx="22.8" cy="23.8" r="6" fill="url(#gRed)" stroke="#f4f4f4" stroke-width="0.8"/>
  <path d="M20.2,21.2 L25.4,26.4 M25.4,21.2 L20.2,26.4" stroke="#e6e6e6" stroke-width="1.9" stroke-linecap="round"/>
</g>
<g id="printer">
  <path d="M19.5,6.5 Q20,5 22,5 L28.5,5 Q30,5 30,6.5 L30,15 L19.5,15 Z" fill="url(#gPrn)"/>
  <path d="M9.5,13 L26,11.5 L33.5,17 L33.5,28 L27,30.5 L11,27 L9,23 Z" fill="#6e6e6e"/>
  <path d="M9.5,13 L26,11.5 L33,16.5 L16,18.5 Z" fill="#8a8a8a"/>
  <path d="M10,19 L26,21 L26,27 L11,25 Z" fill="#5a5a5a"/>
  <path d="M26,21 L33.5,17 L33.5,28 L27,30.5 Z" fill="#d8dadc"/>
  <path d="M29,20 L33.5,17.5 L33.5,28 L29,29.5Z" fill="#7a7e82"/>
  <rect x="26.8" y="22.5" width="1.2" height="1.8" fill="#3050d0"/>
  <path d="M8.5,14.5 L10,14 L10,24 L8.5,24Z" fill="#e0e0e0"/>
  <path d="M4,27 L16.5,23 L24,26.5 L12.5,31 Z" fill="#c4e2e8" stroke="#7a7a7a" stroke-width="0.8"/>
  <path d="M12.5,31 L24,26.5 L24.5,28 L13,32.5Z" fill="#6a6a6a"/>
</g>
<g id="gear">
  <path d="M15.75,9.26 L16.35,4.97 L21.15,4.97 L21.75,9.26 L22.63,9.63 L26.09,7.02 L29.48,10.41 L26.87,13.87 L27.24,14.75 L31.53,15.35 L31.53,20.15 L27.24,20.75 L26.87,21.63 L29.48,25.09 L26.09,28.48 L22.63,25.87 L21.75,26.24 L21.15,30.53 L16.35,30.53 L15.75,26.24 L14.87,25.87 L11.41,28.48 L8.02,25.09 L10.63,21.63 L10.26,20.75 L5.97,20.15 L5.97,15.35 L10.26,14.75 L10.63,13.87 L8.02,10.41 L11.41,7.02 L14.87,9.63Z" fill="url(#gGear)" stroke="#17479a" stroke-width="0.8" stroke-linejoin="round"/>
  <circle cx="18.75" cy="17.75" r="5.6" fill="none" stroke="#48c0ec" stroke-width="1.6"/>
  <circle cx="18.75" cy="17.75" r="4.6" fill="#eef0f2" stroke="#1a5aa8" stroke-width="0.8"/>
</g>
<g id="page">
  <path d="M0,0 L14.5,2 L14.3,26.5 L-0.5,23.5 Z" fill="url(#gPage)" stroke="#b8c4cf" stroke-width="0.8"/>
  <path d="M14.5,2 L15.3,3 L15.1,26.8 L14.3,26.5Z" fill="#c9d2da"/>
</g>
<g id="floppy">
  <path d="M0,0 L21,2.5 L23.6,5 L23.6,29 L0.5,24 Z" fill="url(#gFloppy)"/>
  <path d="M0,0 L2,0.3 L2.5,24.5 L0.5,24Z" fill="#3a6ab0"/>
  <path d="M5,0.8 L17,2 L17,10.5 L5,9.2 Z" fill="url(#gShutter)"/>
  <path d="M13.3,3.8 L16,4 L16,9.5 L13.3,9.2Z" fill="#3a6ab8"/>
  <path d="M4,10.5 L19.5,12.5 L19.5,27.5 L4,23.5 Z" fill="#f6f8fa" stroke="#a8b4c4" stroke-width="0.4"/>
  <path d="M5.5,14 L12,14.8 M5.5,16.5 L16,17.6 M5.5,19 L12,19.8" stroke="#9aa6b4" stroke-width="0.6"/>
</g>
</defs>
<use href="#page" x="19.5" y="12"/><circle cx="30.5" cy="30.5" r="5.9" fill="url(#gGreen)" stroke="#d8d8d8" stroke-width="0.6"/><path d="M30.5,26.8 V34.2 M26.8,30.5 H34.2" stroke="#e8f4e8" stroke-width="1.7"/><use href="#page" x="144.8" y="12"/><path d="M147,33.4 C152.5,34 158.5,32 161.8,28 L165.7,31.8 L164.9,21 L154.2,22 L157.9,25.4 C155,29 151,31.6 147,33.4 Z" fill="url(#gArrow)" stroke="#7a9a80" stroke-width="0.6" stroke-linejoin="round"/><path d="M156.5,29.6 Q160.5,26.5 163.8,22" stroke="#d8ffd8" stroke-width="0.8" fill="none" opacity="0.9"/><path d="M227,10 L245,10 L251.8,16.8 L251.8,38.6 L227,38.6 Z" fill="#ececec"/><path d="M227,10 L245,10" stroke="#e0e0e0" stroke-width="0.8"/><path d="M227,10 L227,38.6" stroke="#e2e2e2" stroke-width="0.8"/><path d="M251.6,16.6 L251.6,38.4 L228,38.4" fill="none" stroke="#8c8c8c" stroke-width="1.2"/><path d="M245,10 L245,16.8 L251.8,16.8 Z" fill="#fafafa" stroke="#9a9a9a" stroke-width="0.9" stroke-linejoin="round"/><path d="M244,37.6 L251,37.6 L251,30Z" fill="#b8ccf4" opacity="0.9"/><path d="M232.5,30.5 L226.6,37.2" stroke="#6a6a6a" stroke-width="3.2" stroke-linecap="round"/><path d="M232.5,30.5 L226.6,37.2" stroke="#e0e0e0" stroke-width="1.1" stroke-linecap="round"/><circle cx="237.6" cy="24.2" r="7.1" fill="url(#gLens)" stroke="#707070" stroke-width="1.5"/><path d="M233,21.5 Q236,18.5 240.5,19.5 L239,23 Q236,22 233.5,24Z" fill="#ffffff" opacity="0.5"/><path d="M311,11 L330.8,12.6 L330.8,27.8 L311,26.2 Z" fill="url(#gWin)" stroke="#a9b6c2" stroke-width="0.9"/><path d="M311,11 L330.8,12.6 L330.8,16.2 L311,14.6 Z" fill="url(#gTitleBar)" stroke="#a9b6c2" stroke-width="0.6"/><path d="M324.3,14.0 h1.6 M326.5,14.1 h1.6 M328.40000000000003,14.2 h1.4" stroke="#4a82c8" stroke-width="1.2"/><path d="M304,17.2 L323.2,18.8 L323.2,35.6 L304,34.0 Z" fill="url(#gWin)" stroke="#a9b6c2" stroke-width="0.9"/><path d="M304,17.2 L323.2,18.8 L323.2,22.400000000000002 L304,20.8 Z" fill="url(#gTitleBar)" stroke="#a9b6c2" stroke-width="0.6"/><path d="M316.7,20.2 h1.6 M318.9,20.3 h1.6 M320.8,20.400000000000002 h1.4" stroke="#4a82c8" stroke-width="1.2"/><circle cx="324.6" cy="31.6" r="6.6" fill="url(#gGreen)" stroke="#d8d8d8" stroke-width="0.6"/><path d="M324.6,27.4 V35.8 M320.4,31.6 H328.8" stroke="#e4eee4" stroke-width="2"/><use href="#trash" x="392" y="6"/><use href="#printer" x="472" y="6"/><use href="#gear" x="572" y="6"/><rect x="642.5" y="19.5" width="23.5" height="19" fill="#f4f8ff" stroke="#404a68" stroke-width="1"/><rect x="642.5" y="19.5" width="23.5" height="3.5" fill="#5a72b8"/><path d="M642.5,23.3 H666" stroke="#404a68" stroke-width="0.8"/><path d="M642.5,27.2 H666" stroke="#404a68" stroke-width="0.8"/><path d="M642.5,31.1 H666" stroke="#404a68" stroke-width="0.8"/><path d="M642.5,35 H666" stroke="#404a68" stroke-width="0.8"/><path d="M658.2,19.5 V38.5" stroke="#404a68" stroke-width="0.8"/><path d="M636,11.2 Q636,9.5 639,9.5 L657,9.5 Q660,9.5 659,12 L651.5,24.5 L650.5,37.5 L646,37.5 L645.4,24.5 Z" fill="url(#gFunnel)"/><ellipse cx="647.5" cy="10.8" rx="11.5" ry="1.6" fill="#4a9ae6"/><path d="M640,12 L651,12 L647,22Z" fill="#8ac4f4" opacity="0.6"/><path d="M20.3,136.5 L20.3,125.5 Q20.3,121 26.6,121 Q32.9,121 32.9,125.5 L32.9,136.5 Z" fill="url(#gCal)" stroke="#a0a0a0" stroke-width="0.6"/><rect x="20.3" y="132.8" width="12.6" height="4" fill="#3a76d8"/><rect x="22" y="134" width="3.5" height="1" fill="#d8e4fa"/><path d="M23.4,126.6 L24.9,125.6 V131.2 M26.9,125.9 H29.6 M27,125.9 L26.7,128.2 Q29.6,127.4 29.6,129.4 Q29.6,131.4 26.6,131" fill="none" stroke="#4a4a4a" stroke-width="1.05"/><path d="M35,172.3 L35.2,186.6 L39,183.2 L45.6,182 Z" fill="#1e1e1e" stroke="#fff" stroke-width="1" stroke-linejoin="round"/><circle cx="45.1" cy="193" r="9" fill="url(#gGreen2)" stroke="#b090c0" stroke-width="0.4"/><ellipse cx="45.1" cy="188" rx="6" ry="3.5" fill="#c8dcc0" opacity="0.55"/><path d="M45.1,188.6 V197.4 M40.7,193 H49.5" stroke="#fff" stroke-width="2.5"/><use href="#floppy" x="70" y="173.5" transform="scale(1,0.9) translate(0,19.4)"/><circle cx="89.6" cy="195.4" r="7.3" fill="url(#gGreen)" stroke="#d8d8d8" stroke-width="0.5"/><path d="M86.5,198 A4,4 0 1 1 92.8,196.8" fill="none" stroke="#f0f0f0" stroke-width="1.6"/><path d="M84.5,196.5 L88.5,195.8 L87,200Z" fill="#f0f0f0"/><use href="#floppy" x="109.2" y="173"/><use href="#trash" x="185.5" y="169.8" transform="translate(185.5,169.8) scale(1) translate(-185.5,-169.8)"/><use href="#printer" x="244" y="170"/><use href="#gear" x="327" y="170"/><path d="M123,22.5 H130.2 L126.6,26.4Z" fill="#111"/><path d="M456,22.5 H463.2 L459.6,26.4Z" fill="#111"/><path d="M555,22.5 H562.2 L558.6,26.4Z" fill="#111"/><path d="M616,22.5 H623.2 L619.6,26.4Z" fill="#111"/><path d="M719,22.5 H726.2 L722.6,26.4Z" fill="#111"/><path d="M387.2,177 L404.6,172.2 L404.6,184.6 L387.2,190.6 Z" fill="url(#gLid)" stroke="#f4f4f4" stroke-width="1.4"/><path d="M386.4,176.6 L405.4,171.4 L405.4,185 L386.4,191.4 Z" fill="none" stroke="#8a8a8a" stroke-width="0.5"/><path d="M388,176.2 L390,175.6 M391.5,175.2 L393.5,174.6 M395,174.2 L397,173.6 M398.5,173.2 L400.5,172.6" stroke="#7a8088" stroke-width="0.8"/><path d="M386.8,191 L404.8,184.8 L411.5,188.5 L393.2,199.8 Z" fill="#f2f2f2" stroke="#8a8a8a" stroke-width="0.5"/><path d="M390.5,191.6 L404.2,186.6 L409.2,189.2 L394.8,196.6 Z" fill="#3a6a9c"/><path d="M393.2,199.8 L411.5,188.5 L411.5,190 L393.4,201.4 Z" fill="#b8bcc0"/><path d="M409.6,186.5 L414.2,186.5 L413.2,193.5 L410.2,193.5 Z" fill="#d8b838" stroke="#8a7010" stroke-width="0.4"/><ellipse cx="411.9" cy="182.8" rx="4.5" ry="5.8" fill="url(#gYel)" stroke="#8a7010" stroke-width="0.5"/><ellipse cx="407.6" cy="195.6" rx="6.6" ry="5" fill="#c8a428" stroke="#6a5a10" stroke-width="0.5"/><ellipse cx="407.3" cy="197.4" rx="5.7" ry="4" fill="#2a2a2a"/><ellipse cx="407.3" cy="198.3" rx="5.1" ry="3.5" fill="url(#gStampB)"/><circle cx="478.6" cy="188.8" r="12.8" fill="#dadada" stroke="#bdbdbd" stroke-width="0.8"/><circle cx="478.6" cy="188.8" r="11.3" fill="url(#gBall2)"/><path d="M467.40000000000003,190.3 A11.3,11.3 0 0 1 489.8,186.3 Q480.6,185.8 467.40000000000003,190.3Z" fill="url(#gBallTop)"/><path d="M478.6,181.4 L485.8,189.4 L481.6,189.4 L481.6,196.0 L476.0,196.0 L476.0,189.4 L471.8,189.4 Z" fill="url(#gArrW)"/><circle cx="519.4" cy="188.8" r="12.8" fill="#dadada" stroke="#bdbdbd" stroke-width="0.8"/><circle cx="519.4" cy="188.8" r="11.3" fill="url(#gBall2)"/><path d="M508.2,190.3 A11.3,11.3 0 0 1 530.6,186.3 Q521.4,185.8 508.2,190.3Z" fill="url(#gBallTop)"/><path d="M519.4,196.60000000000002 L526.6,189.4 L522.4,189.4 L522.4,181.60000000000002 L516.8,181.60000000000002 L516.8,189.4 L512.1999999999999,189.4 Z" fill="url(#gArrW)"/><rect x="544.6" y="176.8" width="24.2" height="19" fill="url(#gWin)" stroke="#a8b8d0" stroke-width="0.9"/><rect x="544.6" y="176.8" width="24.2" height="2.2" fill="#c4d0e4"/><path d="M562.5,176.6 h1.2 M564.8,176.6 h1.2 M567,176.6 h1.2" stroke="#4a6aa8" stroke-width="1"/><path d="M548.6,190.3 L553.6,185.4 L558.3,190.4 L569.5,181.4 L573.8,186.6 L558.5,201.8 Z" fill="url(#gCheck)" stroke="#d03a28" stroke-width="0.5" stroke-linejoin="round"/><path d="M550.5,190 L553.6,187 L558.3,192 L569.5,183" fill="none" stroke="#fcb0a0" stroke-width="0.9" opacity="0.8"/></svg></body></html>
